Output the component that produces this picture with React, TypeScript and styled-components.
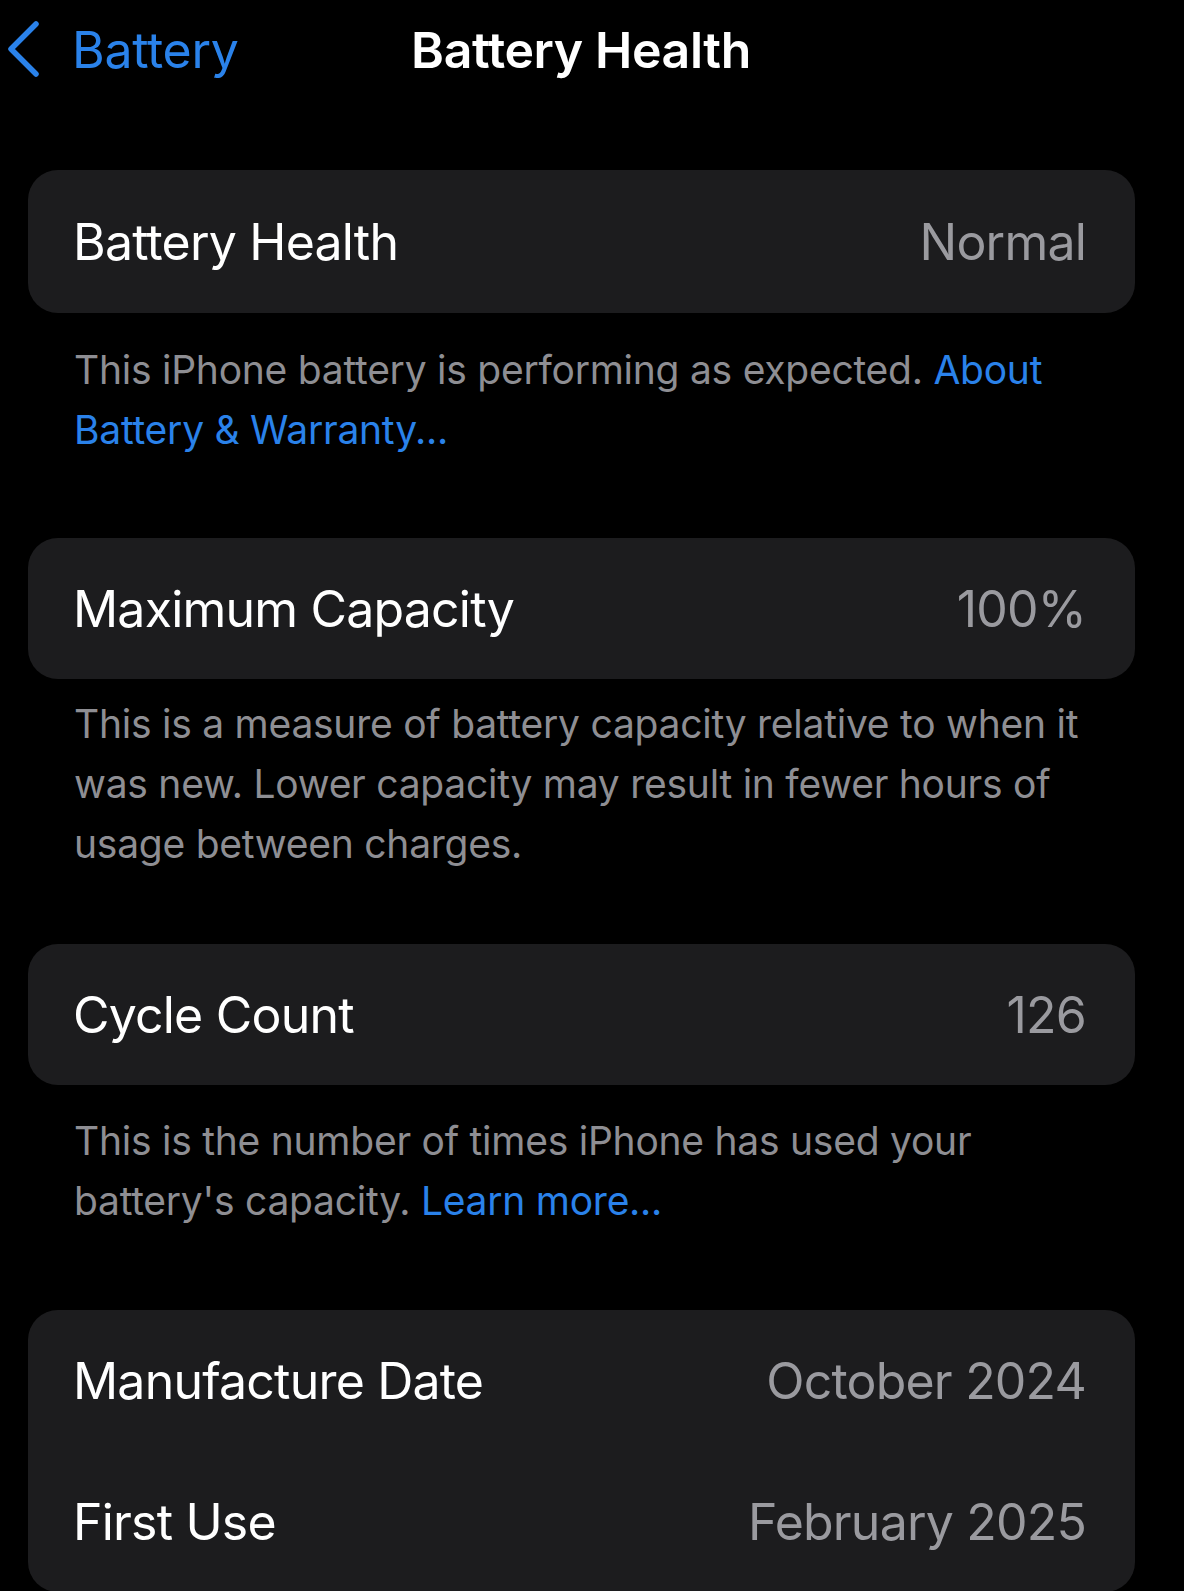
import React from "react";
import styled, { createGlobalStyle } from "styled-components";

const BLUE = "#2a82ea";

const GlobalStyle = createGlobalStyle`
  html, body {
    margin: 0;
    padding: 0;
    background: #000;
  }
  body {
    font-family: Inter, "Noto Sans", "Liberation Sans", sans-serif;
    -webkit-font-smoothing: antialiased;
  }
`;

const Screen = styled.div`
  width: 1184px;
  min-height: 1591px;
  background: #000;
  overflow: hidden;
`;

const NavBar = styled.div`
  height: 100px;
  display: grid;
  grid-template-columns: 1fr auto 1fr;
  align-items: center;
  padding-right: 22px;
`;

const BackLink = styled.div`
  display: flex;
  align-items: center;
  gap: 30px;
  padding-left: 6px;
  color: ${BLUE};
  font-size: 50px;
  letter-spacing: -0.3px;
`;

const NavTitle = styled.div`
  color: #fff;
  font-size: 50px;
  font-weight: 600;
  letter-spacing: -0.4px;
`;

const Content = styled.div`
  padding: 70px 49px 0 28px;
`;

const Card = styled.div`
  background: #1c1c1e;
  border-radius: 30px;
  overflow: hidden;
`;

const Row = styled.div<{ $height?: number }>`
  height: ${(p) => p.$height ?? 143}px;
  display: flex;
  align-items: center;
  justify-content: space-between;
  padding: 0 49px 0 45px;
  font-size: 50px;
  letter-spacing: -0.8px;
`;

const Label = styled.span`
  color: #fff;
`;

const Value = styled.span`
  color: #9a9a9f;
`;

const Footer = styled.p<{ $top?: number; $bottom?: number }>`
  margin: 0;
  padding: ${(p) => p.$top ?? 27}px 22px ${(p) => p.$bottom ?? 78}px 46px;
  color: #8e8e93;
  font-size: 39px;
  line-height: 60px;
  letter-spacing: -0.25px;
`;

const Link = styled.span`
  color: ${BLUE};
`;

const Chevron = () => (
  <svg width="36" height="60" viewBox="0 0 36 60">
    <path
      d="M30 4 L5 29 L30 54"
      fill="none"
      stroke={BLUE}
      strokeWidth="5.5"
      strokeLinecap="round"
      strokeLinejoin="round"
    />
  </svg>
);

export default function App() {
  return (
    <Screen>
      <GlobalStyle />
      <NavBar>
        <BackLink>
          <Chevron />
          Battery
        </BackLink>
        <NavTitle>Battery Health</NavTitle>
        <div />
      </NavBar>
      <Content>
        <Card>
          <Row>
            <Label>Battery Health</Label>
            <Value>Normal</Value>
          </Row>
        </Card>
        <Footer>
          This iPhone battery is performing as expected.{" "}
          <Link>About Battery &amp; Warranty...</Link>
        </Footer>

        <Card>
          <Row $height={141}>
            <Label>Maximum Capacity</Label>
            <Value>100%</Value>
          </Row>
        </Card>
        <Footer $top={15} $bottom={70}>
          This is a measure of battery capacity relative to when it was new.
          Lower capacity may result in fewer hours of usage between charges.
        </Footer>

        <Card>
          <Row $height={141}>
            <Label>Cycle Count</Label>
            <Value>126</Value>
          </Row>
        </Card>
        <Footer $top={26} $bottom={79}>
          This is the number of times iPhone has used your battery's capacity.{" "}
          <Link>Learn more...</Link>
        </Footer>

        <Card>
          <Row $height={142}>
            <Label>Manufacture Date</Label>
            <Value>October 2024</Value>
          </Row>
          <Row $height={140}>
            <Label>First Use</Label>
            <Value>February 2025</Value>
          </Row>
        </Card>
      </Content>
    </Screen>
  );
}
